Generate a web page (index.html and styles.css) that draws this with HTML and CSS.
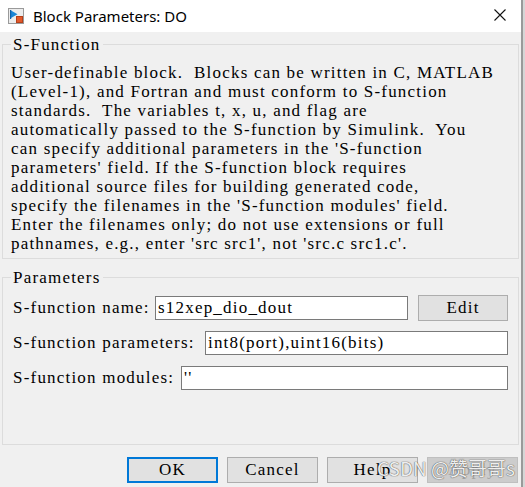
FILE: index.html
```html
<!DOCTYPE html>
<html>
<head>
<meta charset="utf-8">
<link rel="stylesheet" href="styles.css">
</head>
<body>
<div class="window">
  <div class="titlebar">
    <svg class="app-icon" width="16" height="16" viewBox="0 0 16 16">
      <rect x="0.5" y="0.5" width="15" height="15" fill="#ececec" stroke="#9a9a9a"/>
      <path d="M3 2.5 L3 10 L9.5 6.2 Z" fill="#1a86d6"/>
      <rect x="2" y="2" width="1.2" height="9" fill="#0f5fa8"/>
      <rect x="8.5" y="8.5" width="6" height="6" fill="#e2592a" stroke="#b5401a"/>
    </svg>
    <span class="title">Block Parameters: DO</span>
    <svg class="close" width="12" height="12" viewBox="0 0 12 12">
      <path d="M0.5 0.5 L11.5 11.5 M11.5 0.5 L0.5 11.5" stroke="#111" stroke-width="1.1" fill="none"/>
    </svg>
  </div>
  <div class="content">
    <fieldset class="group desc-group">
      <legend class="group-title">S-Function</legend>
      <div class="desc">User-definable block.  Blocks can be written in C, MATLAB
(Level-1), and Fortran and must conform to S-function
standards.  The variables t, x, u, and flag are
automatically passed to the S-function by Simulink.  You
can specify additional parameters in the 'S-function
parameters' field. If the S-function block requires
additional source files for building generated code,
specify the filenames in the 'S-function modules' field.
Enter the filenames only; do not use extensions or full
pathnames, e.g., enter 'src src1', not 'src.c src1.c'.</div>
    </fieldset>
    <fieldset class="group params-group">
      <legend class="group-title">Parameters</legend>
      <div class="rows">
        <div class="row">
          <span class="lbl lbl-name">S-function name:</span>
          <div class="input input-name">s12xep_dio_dout</div>
          <button class="btn btn-edit">Edit</button>
        </div>
        <div class="row">
          <span class="lbl lbl-params">S-function parameters:</span>
          <div class="input input-fill">int8(port),uint16(bits)</div>
        </div>
        <div class="row">
          <span class="lbl lbl-modules">S-function modules:</span>
          <div class="input input-fill">''</div>
        </div>
      </div>
    </fieldset>
    <div class="buttons">
      <button class="btn btn-ok">OK</button>
      <button class="btn">Cancel</button>
      <button class="btn">Help</button>
      <button class="btn btn-disabled">Apply</button>
    </div>
  </div>
  <div class="watermark">CSDN @赞哥哥s</div>
</div>
</body>
</html>
```

FILE: styles.css
```css
html, body {
  margin: 0;
  padding: 0;
}
body {
  background: #d6d6d6;
  width: 525px;
  height: 487px;
  overflow: hidden;
}
.window {
  position: relative;
  width: 523px;
  height: 487px;
  box-sizing: border-box;
  border-right: 2px solid #9a9a9a;
  background: #f0f0f0;
  overflow: hidden;
  font-family: "Liberation Serif", serif;
  font-size: 17px;
  letter-spacing: 1.2px;
  color: #000;
}
.titlebar {
  height: 32px;
  background: #fff;
  display: flex;
  align-items: center;
  padding-left: 8px;
  box-sizing: border-box;
}
.app-icon {
  display: block;
  flex: none;
  margin-top: -1px;
}
.title {
  font-family: "Noto Sans", "Liberation Sans", sans-serif;
  font-size: 15px;
  letter-spacing: 0;
  margin-left: 9px;
  color: #000;
  flex: 1;
}
.close {
  display: block;
  margin-right: 15px;
  margin-top: -3px;
}
.content {
  display: flex;
  flex-direction: column;
}
.group {
  margin: 0 2px;
  border: 1px solid #dcdcdc;
  padding: 0 10px 0 8px;
  min-width: 0;
}
.group-title {
  padding: 0 2px;
  line-height: 19px;
}
.desc-group {
  margin-top: 3px;
  padding-top: 9px;
  padding-bottom: 5px;
}
.desc {
  white-space: pre;
  line-height: 19px;
}
.params-group {
  margin-top: 9px;
  padding-top: 8px;
  padding-bottom: 53px;
}
.rows {
  display: flex;
  flex-direction: column;
  gap: 9px;
  padding-left: 2px;
}
.row {
  display: flex;
  align-items: center;
  height: 26px;
}
.lbl {
  white-space: pre;
  flex: none;
}
.lbl-name { width: 142px; }
.lbl-params { width: 192px; }
.lbl-modules { width: 168px; }
.input {
  height: 24px;
  box-sizing: border-box;
  background: #fff;
  border: 1px solid #7a7a7a;
  padding: 0 2px;
  line-height: 22px;
  white-space: pre;
}
.input-name {
  width: 253px;
  flex: none;
}
.input-fill {
  flex: 1;
}
.btn {
  font-family: "Liberation Serif", serif;
  font-size: 17px;
  letter-spacing: 1.2px;
  color: #000;
  background: #e1e1e1;
  border: 1px solid #adadad;
  height: 26px;
  width: 91px;
  padding: 0;
  box-sizing: border-box;
  flex: none;
}
.btn-edit {
  width: 90px;
  margin-left: 10px;
}
.buttons {
  display: flex;
  justify-content: flex-end;
  gap: 9px;
  margin-top: 12px;
  padding-right: 3px;
}
.btn-ok {
  border: 2px solid #0078d7;
}
.btn-disabled {
  background: #cccccc;
  border-color: #bfbfbf;
  color: #a3a3a3;
}
.watermark {
  position: absolute;
  left: 377px;
  top: 455px;
  font-family: "Noto Sans CJK SC", sans-serif;
  font-size: 19px;
  letter-spacing: 0;
  line-height: 26px;
  color: rgba(255, 255, 255, 0.92);
  text-shadow: 0 0 1px rgba(60, 60, 60, 0.8), 0 0 1px rgba(60, 60, 60, 0.8);
  white-space: nowrap;
}
```
